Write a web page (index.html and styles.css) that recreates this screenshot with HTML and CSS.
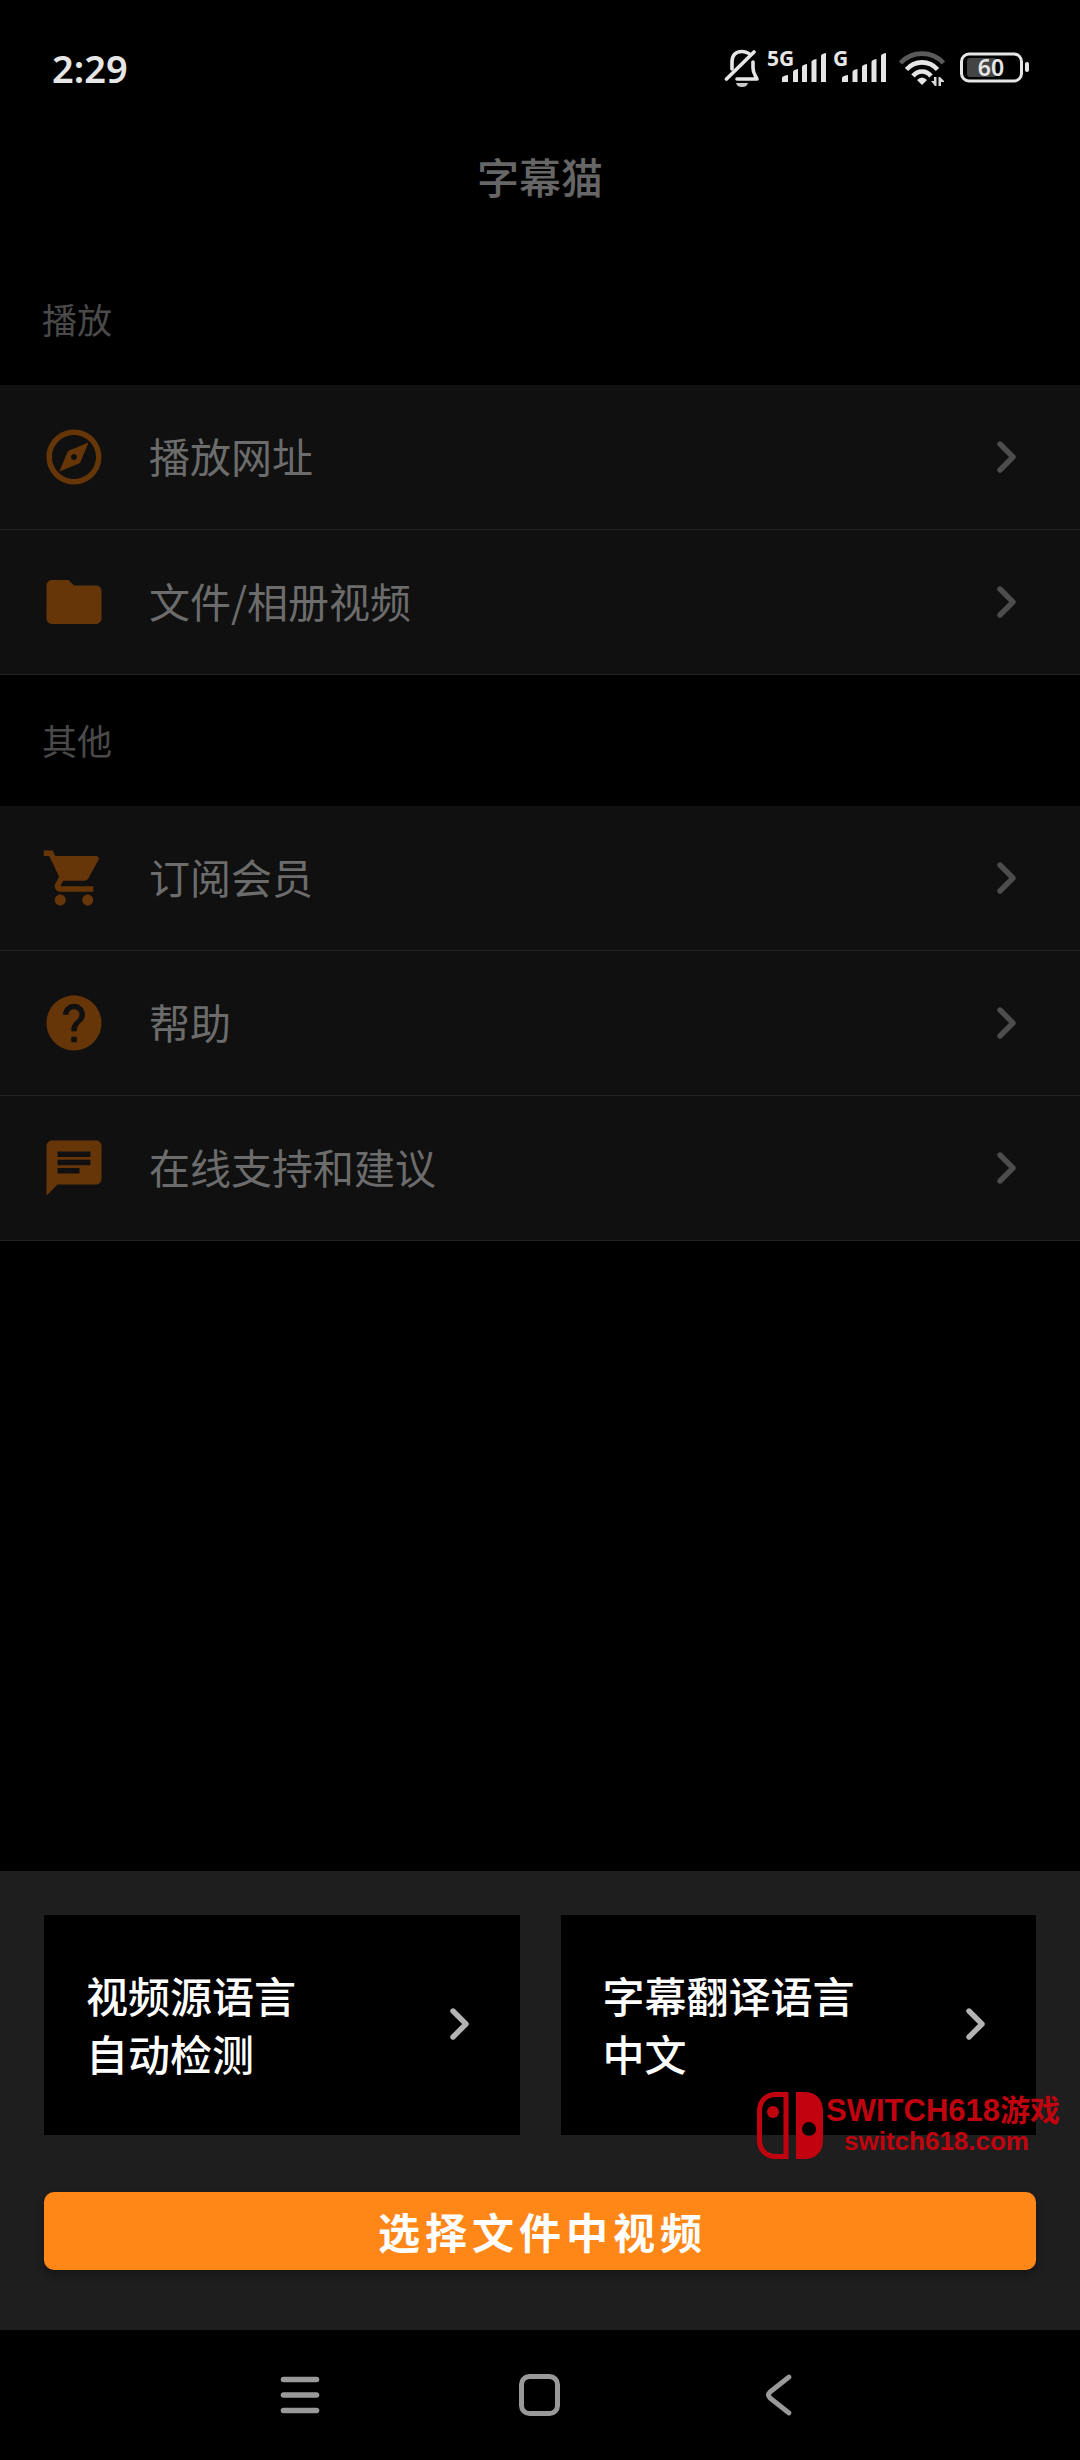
FILE: index.html
```html
<!DOCTYPE html>
<html lang="zh-CN">
<head>
<meta charset="utf-8">
<meta name="viewport" content="width=device-width, initial-scale=1">
<title>字幕猫</title>
<link rel="stylesheet" href="styles.css">
</head>
<body>
<svg class="defs" width="0" height="0" aria-hidden="true">
  <symbol id="chevron" viewBox="0 0 20 32"><path d="M3 3 16 16 3 29" fill="none" stroke="currentColor" stroke-width="5.4" stroke-linecap="round" stroke-linejoin="round"/></symbol>
</svg>
<div class="screen">
  <div class="status">
    <time class="clock">2:29</time>
    <div class="indicators">
      <svg class="bell" width="36" height="44" viewBox="0 0 36 44" aria-label="静音">
        <g fill="none" stroke="#e6e6e6" stroke-width="3.6" stroke-linecap="round" stroke-linejoin="round">
          <path d="M8 23V16C8 9 12 5.500 18 5.500c3 0 5 1 7 2"/>
          <path d="M29 16v6c0 5 2 7 4 11H13"/>
          <path d="M2.500 33 30 6"/>
        </g>
        <path d="M12 37h12c-1 3-3 4-6 4s-5-1-6-4z" fill="#c8c8c8"/>
      </svg>
      <svg class="signal" width="60" height="56" viewBox="0 -6 60 56" fill="#e6e6e6">
        <text x="0" y="20" class="net">5G</text>
        <path d="M15 36v-4q0-2 6-3v7zM26 36V26q0-2 5-3v13zM35 36V21q0-2 5-3v18zM44.500 36V16q0-2 5-3v23zM54 36V10q0-2 5-3v29z"/>
      </svg>
      <svg class="signal second" width="54" height="56" viewBox="0 -6 54 56" fill="#e6e6e6">
        <text x="0" y="20" class="net">G</text>
        <path d="M9 36v-4q0-2 6-3v7zM19.500 36V26q0-2 5-3v13zM29 36V21q0-2 5-3v18zM38.500 36V16q0-2 5-3v23zM48 36V10q0-2 5-3v29z"/>
      </svg>
      <svg class="wifi" width="46" height="44" viewBox="0 0 46 44">
        <g fill="none" stroke="#e6e6e6" stroke-width="4.600">
          <path d="M1.500 17C13 4.500 33 4.500 44.500 17" stroke="#5a5a5a"/>
          <path d="M7.500 23.500C16 14 30 14 38.500 23.500"/>
          <path d="M14 30C19 24 27 24 32 30"/>
        </g>
        <path d="M18 34q5-5 10 0l-5 5z" fill="#e6e6e6"/>
        <path d="M32 35h3v-4h2.500v9H36zM39.500 40v-9H41l4 4v1h-3v4z" fill="#d8d8d8"/>
      </svg>
      <svg class="battery" width="70" height="44" viewBox="0 0 70 44">
        <rect x="1.500" y="8" width="60" height="27" rx="7.500" fill="none" stroke="#e6e6e6" stroke-width="3"/>
        <rect x="7" y="12" width="29" height="19" rx="3" fill="#444"/>
        <rect x="65" y="16" width="4" height="10" rx="2" fill="#e6e6e6"/>
        <text x="31" y="30" class="charge" fill="#e6e6e6">60</text>
      </svg>
    </div>
  </div>

  <header class="appbar"><h1>字幕猫</h1></header>

  <main>
    <section>
      <h2>播放</h2>
      <ul class="list">
        <li><a class="row" href="#url">
          <svg class="icon" viewBox="0 0 24 24"><path fill-rule="evenodd" d="M12 10.900c-.61 0-1.100.49-1.100 1.100s.49 1.100 1.100 1.100 1.100-.49 1.100-1.100-.49-1.100-1.100-1.100zM12 2C6.480 2 2 6.480 2 12s4.480 10 10 10 10-4.480 10-10S17.520 2 12 2zm0 18c-4.410 0-8-3.590-8-8s3.590-8 8-8 8 3.590 8 8-3.590 8-8 8zM14.190 14.190 6.700 17.300 9.810 9.810 17.300 6.700z"/></svg>
          <span class="label">播放网址</span><svg class="chev"><use href="#chevron"/></svg></a></li>
        <li><a class="row" href="#files">
          <svg class="icon" viewBox="0 0 24 24"><path d="M10 4H4c-1.100 0-1.990.9-1.990 2L2 18c0 1.100.9 2 2 2h16c1.100 0 2-.9 2-2V8c0-1.100-.9-2-2-2h-8l-2-2z"/></svg>
          <span class="label">文件/相册视频</span><svg class="chev"><use href="#chevron"/></svg></a></li>
      </ul>
    </section>
    <section>
      <h2>其他</h2>
      <ul class="list">
        <li><a class="row" href="#member">
          <svg class="icon" viewBox="0 0 24 24"><path d="M7 18c-1.100 0-1.990.9-1.990 2S5.900 22 7 22s2-.9 2-2-.9-2-2-2zM1 2v2h2l3.600 7.590-1.350 2.450c-.16.280-.25.610-.25.960 0 1.100.9 2 2 2h12v-2H7.420c-.14 0-.25-.11-.25-.25l.03-.12.900-1.630h7.450c.75 0 1.410-.41 1.750-1.030l3.580-6.490c.08-.14.12-.31.12-.48 0-.55-.45-1-1-1H5.210l-.94-2H1zm16 16c-1.100 0-1.990.9-1.990 2s.89 2 1.990 2 2-.9 2-2-.9-2-2-2z"/></svg>
          <span class="label">订阅会员</span><svg class="chev"><use href="#chevron"/></svg></a></li>
        <li><a class="row" href="#help">
          <svg class="icon" viewBox="0 0 24 24"><path d="M12 2C6.480 2 2 6.480 2 12s4.480 10 10 10 10-4.480 10-10S17.520 2 12 2zm1 17h-2v-2h2v2zm2.070-7.750-.9.920C13.450 12.900 13 13.500 13 15h-2v-.5c0-1.100.45-2.100 1.170-2.830l1.240-1.260c.37-.36.590-.86.590-1.410 0-1.100-.9-2-2-2s-2 .9-2 2H8c0-2.210 1.790-4 4-4s4 1.790 4 4c0 .88-.36 1.680-.93 2.250z"/></svg>
          <span class="label">帮助</span><svg class="chev"><use href="#chevron"/></svg></a></li>
        <li><a class="row" href="#support">
          <svg class="icon" viewBox="0 0 24 24"><path d="M20 2H4c-1.100 0-1.990.9-1.990 2L2 22l4-4h14c1.100 0 2-.9 2-2V4c0-1.100-.9-2-2-2zM6 6h12v2H6zM6 9h12v2H6zM6 12h8v2H6z" fill-rule="evenodd"/></svg>
          <span class="label">在线支持和建议</span><svg class="chev"><use href="#chevron"/></svg></a></li>
      </ul>
    </section>
  </main>

  <section class="sheet">
    <div class="languages">
      <button class="card" type="button"><span>视频源语言<br>自动检测</span><svg class="chev"><use href="#chevron"/></svg></button>
      <button class="card" type="button"><span>字幕翻译语言<br>中文</span><svg class="chev"><use href="#chevron"/></svg></button>
    </div>
    <button class="primary" type="button">选择文件中视频</button>
    <div class="watermark">
      <svg width="66" height="67" viewBox="0 0 66 67">
        <path d="M29 2.500H19C9 2.500 2.500 9 2.500 19v29C2.500 58 9 64.500 19 64.500h10z" fill="none" stroke="currentColor" stroke-width="5"/>
        <circle cx="16" cy="20" r="6" fill="currentColor"/>
        <path fill="currentColor" fill-rule="evenodd" d="M39 0h8c12 0 19 7 19 19v29c0 12-7 19-19 19h-8zM52 30a7 7 0 1 0 0 14 7 7 0 1 0 0-14z"/>
      </svg>
      <div class="brand"><div>SWITCH618<span class="han">游戏</span></div><div class="site">switch618.com</div></div>
    </div>
  </section>

  <nav class="system">
    <button type="button" aria-label="菜单"><svg width="44" height="44" viewBox="0 0 44 44"><path d="M5.500 6.500h33M5.500 22h33M5.500 37.500h33" stroke-width="5.600"/></svg></button>
    <button type="button" aria-label="主页"><svg width="44" height="44" viewBox="0 0 44 44"><rect x="3.500" y="3.500" width="36" height="37" rx="8" stroke-width="5"/></svg></button>
    <button type="button" aria-label="返回"><svg width="44" height="44" viewBox="0 0 44 44"><path d="M31 4 12 19q-3 3 0 6l19 15" stroke-width="4.800"/></svg></button>
  </nav>
</div>
</body>
</html>
```
FILE: styles.css
```css
* { box-sizing: border-box; }

body {
  margin: 0;
  background: #000;
  color: #666;
  font-family: "Noto Sans CJK SC", "Noto Sans", sans-serif;
}

h1, h2, ul { margin: 0; padding: 0; }
ul { list-style: none; }
svg { display: block; flex: none; }
button { border: 0; font: inherit; }
.defs { position: absolute; }

.screen {
  display: flex;
  flex-direction: column;
  min-height: 100vh;
}

/* Status bar */
.status {
  display: flex;
  align-items: center;
  justify-content: space-between;
  height: 101px;
  padding: 36px 50px 2px 52px;
}
.clock {
  color: #e6e6e6;
  font: 600 38px/48px "Noto Sans", sans-serif;
}
.indicators { display: flex; align-items: center; }
.signal { margin-left: 7px; }
.signal.second { margin-left: 6px; }
.wifi { margin-left: 12px; }
.battery { margin-left: 15px; }
.net { font: 700 21px "Noto Sans", sans-serif; }
.charge { font: 600 23px "Noto Sans", sans-serif; text-anchor: middle; }

/* Page title */
.appbar {
  display: flex;
  align-items: center;
  justify-content: center;
  height: 153px;
  padding-bottom: 4px;
}
h1 { font-size: 42px; font-weight: 500; line-height: 60px; }

/* Menu */
h2 {
  padding: 39px 42px 41px;
  color: #4a4a4a;
  font-size: 35px;
  font-weight: 400;
  line-height: 51px;
}
.row {
  display: flex;
  align-items: center;
  gap: 42px;
  height: 145px;
  padding: 0 63px 0 41px;
  border-bottom: 1px solid #232323;
  background: #101010;
  color: #6c6c6c;
  text-decoration: none;
}
.icon { width: 66px; height: 66px; fill: #663609; }
.label {
  flex: 1;
  padding-bottom: 4px;
  font-size: 41px;
  line-height: 60px;
}
.chev { width: 20px; height: 32px; color: #4d4d4d; }

/* Bottom sheet */
.sheet {
  position: relative;
  margin-top: auto;
  padding: 44px 44px 60px;
  background: #1e1e1e;
}
.languages {
  display: grid;
  grid-template-columns: 1fr 1fr;
  gap: 41px;
}
.card {
  display: flex;
  align-items: center;
  justify-content: space-between;
  height: 220px;
  padding: 0 50px 2px 42px;
  background: #000;
  color: #fff;
  font-size: 42px;
  font-weight: 500;
  line-height: 58px;
  text-align: left;
}
.card .chev { color: #b3b3b3; }
.primary {
  display: block;
  width: 100%;
  height: 78px;
  margin-top: 57px;
  padding: 0;
  border-radius: 10px;
  background: #ff8718;
  box-shadow: 0 4px 8px rgba(0, 0, 0, .3);
  color: #fff;
  font-size: 42px;
  font-weight: 700;
  letter-spacing: 5px;
  line-height: 78px;
  text-indent: 5px;
}

/* Site mark laid over the sheet */
.watermark {
  position: absolute;
  right: 20px;
  bottom: 171px;
  display: flex;
  align-items: center;
  gap: 3px;
  color: #c1030f;
  pointer-events: none;
}
.brand {
  font: 700 31px/30px "Liberation Sans", "Noto Sans CJK SC", sans-serif;
  white-space: nowrap;
}
.han { font-size: 30px; }
.site { padding-left: 18px; font-size: 26px; }

/* System navigation */
.system {
  display: grid;
  grid-template-columns: repeat(3, 1fr);
  height: 130px;
  padding: 0 16.66%;
}
.system button {
  display: flex;
  align-items: center;
  justify-content: center;
  padding: 0;
  background: none;
}
.system svg {
  fill: none;
  stroke: #999;
  stroke-linecap: round;
  stroke-linejoin: round;
}
```
